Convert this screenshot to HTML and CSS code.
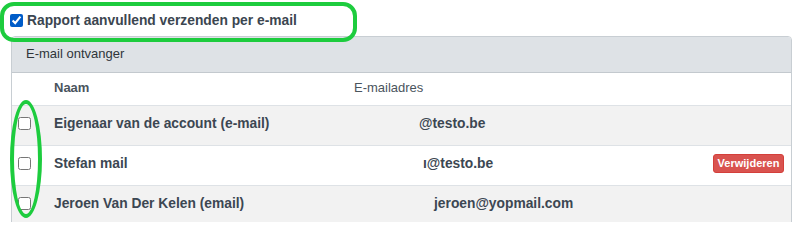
FILE: index.html
```html
<!DOCTYPE html>
<html>
<head>
<meta charset="utf-8">
<link rel="stylesheet" href="styles.css">
</head>
<body>
<div class="page">
  <label class="top-option">
    <input type="checkbox" class="cb" checked>
    <span>Rapport aanvullend verzenden per e-mail</span>
  </label>
  <div class="panel">
    <div class="panel-head">E-mail ontvanger</div>
    <div class="row head-row">
      <div class="cell-cb"></div>
      <div class="cell-name">Naam</div>
      <div class="cell-mail">E-mailadres</div>
      <div class="cell-act"></div>
    </div>
    <div class="row striped">
      <div class="cell-cb"><input type="checkbox" class="cb"></div>
      <div class="cell-name">Eigenaar van de account (e-mail)</div>
      <div class="cell-mail mail-1">@testo.be</div>
      <div class="cell-act"></div>
    </div>
    <div class="row">
      <div class="cell-cb"><input type="checkbox" class="cb"></div>
      <div class="cell-name">Stefan mail</div>
      <div class="cell-mail mail-2">ı@testo.be</div>
      <div class="cell-act"><button class="btn-del">Verwijderen</button></div>
    </div>
    <div class="row striped">
      <div class="cell-cb"><input type="checkbox" class="cb"></div>
      <div class="cell-name">Jeroen Van Der Kelen (email)</div>
      <div class="cell-mail mail-3">jeroen@yopmail.com</div>
      <div class="cell-act"></div>
    </div>
  </div>
  <div class="mark mark-top"></div>
  <div class="mark mark-oval"></div>
</div>
</body>
</html>
```

FILE: styles.css
```css
html, body {
  margin: 0;
  padding: 0;
  background: #ffffff;
}
body {
  font-family: "Liberation Sans", Arial, sans-serif;
  color: #3c4650;
  overflow: hidden;
}
.page {
  position: relative;
  width: 805px;
  height: 222px;
  overflow: hidden;
}
.top-option {
  display: flex;
  align-items: center;
  height: 36px;
  padding-left: 10px;
  padding-top: 4px;
  box-sizing: border-box;
  font-size: 13.8px;
  font-weight: bold;
  color: #3b4650;
}
.cb {
  width: 13px;
  height: 13px;
  margin: 0;
  flex: none;
}
.top-option .cb {
  margin-right: 4px;
}
.panel {
  margin-left: 11px;
  width: 781px;
  border: 1px solid #c8ced3;
  border-radius: 4px 4px 0 0;
  box-sizing: border-box;
}
.panel-head {
  height: 36px;
  display: flex;
  align-items: center;
  padding-left: 14px;
  padding-bottom: 2px;
  box-sizing: border-box;
  background: #dee2e6;
  border-bottom: 1px solid #c3c9ce;
  border-radius: 3px 3px 0 0;
  font-size: 13px;
  color: #2f353a;
}
.row {
  display: grid;
  grid-template-columns: 42px 300px 1fr auto;
  align-items: center;
  height: 40px;
  padding-bottom: 5px;
  border-bottom: 1px solid #dee2e6;
  box-sizing: border-box;
  font-size: 13.8px;
  font-weight: bold;
  color: #3c4752;
}
.row.striped {
  background: #f2f2f2;
}
.head-row {
  height: 33px;
  padding-bottom: 3px;
  font-size: 13px;
  color: #4a545d;
  background: #ffffff;
}
.head-row .cell-mail {
  font-weight: normal;
}
.cell-cb {
  padding-left: 6px;
  display: flex;
  align-items: center;
}
.cell-name {
  white-space: nowrap;
}
.cell-mail {
  white-space: nowrap;
}
.mail-1 {
  padding-left: 65px;
}
.mail-2 {
  padding-left: 69px;
}
.mail-3 {
  padding-left: 80px;
}
.cell-act {
  padding-right: 7px;
  display: flex;
  align-items: center;
}
.btn-del {
  height: 19px;
  width: 71px;
  padding: 0;
  border: 1px solid #d43f3a;
  border-radius: 3px;
  background: #d9534f;
  color: #ffffff;
  font-family: "Liberation Sans", Arial, sans-serif;
  font-size: 11px;
  font-weight: bold;
  line-height: 17px;
}
.mark {
  position: absolute;
  border: 4px solid #1dcc3e;
  box-sizing: border-box;
  pointer-events: none;
}
.mark-top {
  left: 0;
  top: 2px;
  width: 357px;
  height: 40px;
  border-radius: 14px;
}
.mark-oval {
  left: 10px;
  top: 100px;
  width: 32px;
  height: 118px;
  border-radius: 50%;
}
```
